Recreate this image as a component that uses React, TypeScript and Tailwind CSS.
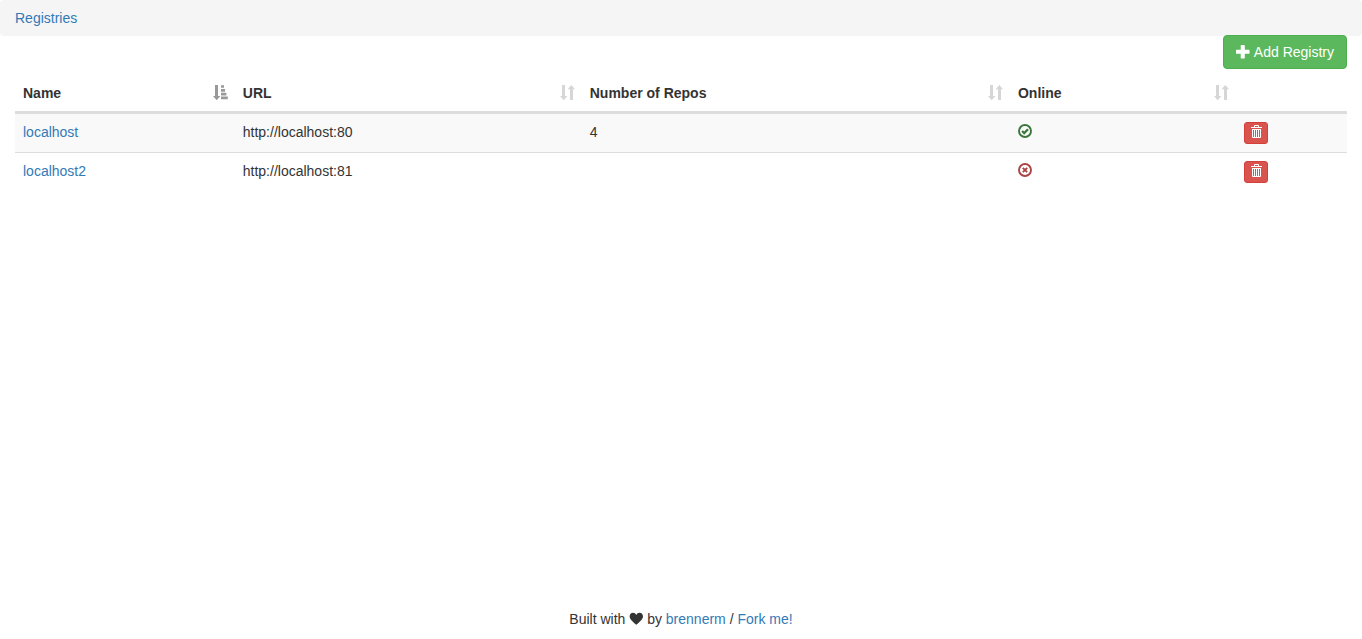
import { useState } from "react";

type Registry = {
  name: string;
  url: string;
  repos: number | null;
  online: boolean;
};

const registries: Registry[] = [
  { name: "localhost", url: "http://localhost:80", repos: 4, online: true },
  { name: "localhost2", url: "http://localhost:81", repos: null, online: false },
];

const columns = [
  { label: "Name", width: "w-[16.5%]" },
  { label: "URL", width: "w-[26.05%]" },
  { label: "Number of Repos", width: "w-[32.15%]" },
  { label: "Online", width: "w-[17%]" },
];

function PlusIcon() {
  return (
    <svg aria-hidden="true" viewBox="0 0 14 14" className="size-3.5" fill="currentColor">
      <path d="M5.300 0h2.900q.6 0 .6.6v4.100h4.100q.6 0 .6.6v2.900q0 .6-.6.6H8.800v4.100q0 .6-.6.6H5.300q-.6 0-.6-.6V8.800H.6Q0 8.800 0 8.200V5.300q0-.6.6-.6h4.100V.6q0-.6.6-.6z" />
    </svg>
  );
}

function SortIcon() {
  return (
    <svg aria-hidden="true" viewBox="0 0 15 16" className="h-4 w-[15px] text-[#d6d6d6]" fill="currentColor">
      <path d="M2 0h3v11H7.400L3.700 15.300 0 11H2z" />
      <path d="M10 15h3V4.300h2L11.300 0 7.600 4.300H10z" />
    </svg>
  );
}

function SortAscendingIcon() {
  return (
    <svg aria-hidden="true" viewBox="0 0 15 16" className="h-4 w-[15px] text-[#999999]" fill="currentColor">
      <path d="M2 0h3v11H7.400L3.700 15.300 0 11H2z" />
      <path d="M8 .3h3v2.500H8zM8 4h4v2.700H8zM8 7.800h5.400v2.700H8zM8 11.600h6.800v2.700H8z" />
    </svg>
  );
}

function TrashIcon() {
  return (
    <svg aria-hidden="true" viewBox="0 0 12 16" className="h-4 w-3" fill="none" stroke="currentColor">
      <path d="M4.500 2V.5h4V2M1 2.500h11" />
      <path d="M2.500 4v8.500h8V4M2 4.500h9M4.500 5v7M6.500 5v7M8.500 5v7" />
    </svg>
  );
}

function OnlineIcon() {
  return (
    <svg role="img" aria-label="Online" viewBox="0 0 14 14" className="size-3.5 text-[#3c763d]" fill="none" stroke="currentColor">
      <circle cx="7" cy="7" r="6" strokeWidth="1.9" />
      <path d="M4.100 7l2.100 2.100 3.800-3.800" strokeWidth="2.200" />
    </svg>
  );
}

function OfflineIcon() {
  return (
    <svg role="img" aria-label="Offline" viewBox="0 0 14 14" className="size-3.5 text-[#a94442]" fill="none" stroke="currentColor">
      <circle cx="7" cy="7" r="6" strokeWidth="1.9" />
      <path d="M4.800 4.800l4.400 4.400M9.200 4.800L4.800 9.200" strokeWidth="1.900" />
    </svg>
  );
}

function HeartIcon() {
  return (
    <svg role="img" aria-label="love" viewBox="0 0 14 14" className="inline-block size-3.5 align-[-2px]" fill="currentColor">
      <path d="M7.300 12.800C6 11.300.6 7.600.6 4.400.6 2.300 2.100.8 3.900.8 5.500.8 6.600 1.700 7.300 3 8 1.700 9.100.8 10.700.8c1.800 0 3.300 1.500 3.300 3.600C14 7.600 8.600 11.300 7.300 12.800z" />
    </svg>
  );
}

const link = "text-[#337ab7] hover:text-[#23527c] hover:underline";

export default function App() {
  const [descending, setDescending] = useState(false);
  const rows = descending ? [...registries].reverse() : registries;

  return (
    <div className="flex min-h-screen flex-col bg-white font-['Liberation_Sans',Arial,sans-serif] text-sm leading-5 text-[#333333]">
      <nav aria-label="Breadcrumb" className="rounded bg-[#f5f5f5] px-[15px] py-2">
        <a href="#registries" className={link}>Registries</a>
      </nav>

      <main className="px-[15px]">
        <div className="-mt-px flex justify-end">
          <button
            type="button"
            className="flex items-center gap-1 rounded border border-[#4cae4c] bg-[#5cb85c] px-3 py-1.5 text-white hover:bg-[#449d44]"
          >
            <PlusIcon />
            Add Registry
          </button>
        </div>

        <table className="mt-1.5 w-full table-fixed border-separate border-spacing-0">
          <thead>
            <tr>
              {columns.map((column, index) => (
                <th key={column.label} scope="col" className={`${column.width} border-b-2 border-[#dddddd] py-2 pr-[7px] pl-2 text-left`}>
                  <button
                    type="button"
                    onClick={() => index === 0 && setDescending(!descending)}
                    className="flex w-full items-center justify-between font-bold"
                  >
                    {column.label}
                    {index === 0 ? <SortAscendingIcon /> : <SortIcon />}
                  </button>
                </th>
              ))}
              <td className="border-b-2 border-[#dddddd] p-2" />
            </tr>
          </thead>
          <tbody>
            {rows.map((registry) => (
              <tr key={registry.name} className="align-top odd:bg-[#f9f9f9]">
                <td className="border-t border-[#dddddd] p-2">
                  <a href={`#${registry.name}`} className={link}>{registry.name}</a>
                </td>
                <td className="border-t border-[#dddddd] p-2">{registry.url}</td>
                <td className="border-t border-[#dddddd] p-2">{registry.repos}</td>
                <td className="border-t border-[#dddddd] px-2 py-2.5">
                  {registry.online ? <OnlineIcon /> : <OfflineIcon />}
                </td>
                <td className="border-t border-[#dddddd] p-2">
                  <button
                    type="button"
                    aria-label={`Delete ${registry.name}`}
                    className="flex rounded-[3px] border border-[#d43f3a] bg-[#d9534f] px-[5px] py-0.5 text-white hover:bg-[#c9302c]"
                  >
                    <TrashIcon />
                  </button>
                </td>
              </tr>
            ))}
          </tbody>
        </table>
      </main>

      <footer className="mt-auto pb-2.5 text-center">
        Built with <HeartIcon /> by <a href="#brennerm" className={link}>brennerm</a> /{" "}
        <a href="#fork" className={link}>Fork me!</a>
      </footer>
    </div>
  );
}
